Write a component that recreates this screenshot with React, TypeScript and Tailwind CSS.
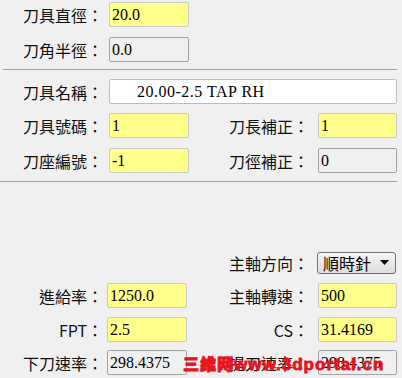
import React from "react";

type Variant = "yellow" | "gray" | "white";

const boxCls: Record<Variant, string> = {
  yellow: "bg-[#ffff8c] border-[#c8c8c8]",
  gray: "bg-[#f0f0f0] border-[#a2a2a2]",
  white: "bg-white border-[#bdbdbd]",
};

function Box({ value, variant, className = "" }: { value: string; variant: Variant; className?: string }) {
  return (
    <div
      className={`h-[25px] border rounded-[2px] flex items-center pl-[2px] text-[16px] leading-none text-black font-['Liberation_Serif',serif] whitespace-pre ${boxCls[variant]} ${className}`}
    >
      {value}
    </div>
  );
}

function Label({ text, className = "" }: { text: string; className?: string }) {
  return (
    <div className={`text-[16px] leading-none text-[#111] text-right whitespace-nowrap ${className}`}>{text}</div>
  );
}

function LeftField({ label, value, variant, inputLeft = "ml-[6px]" }: { label: string; value: string; variant: Variant; inputLeft?: string }) {
  return (
    <div className="flex items-center w-[206px]">
      <Label text={label} className="w-[103px]" />
      <Box value={value} variant={variant} className={`w-[80px] ${inputLeft}`} />
    </div>
  );
}

function RightField({ label, value, variant }: { label: string; value: string; variant: Variant }) {
  return (
    <div className="flex items-center">
      <Label text={label} className="w-[103px]" />
      <Box value={value} variant={variant} className="w-[79px] ml-[9px]" />
    </div>
  );
}

export default function App() {
  return (
    <div className="w-[402px] h-[378px] bg-[#f0f0f0] relative overflow-hidden font-['Noto_Sans_CJK_TC','Noto_Sans_CJK_SC',sans-serif]">
      <div className="flex flex-col pt-[2px]">
        <LeftField label="刀具直徑：" value="20.0" variant="yellow" />
        <div className="mt-[10px]">
          <LeftField label="刀角半徑：" value="0.0" variant="gray" />
        </div>
        <div className="mt-[7px] ml-[3px] w-[394px] h-px bg-[#a0a0a0]" />
        <div className="mt-[9px] flex items-center">
          <Label text="刀具名稱：" className="w-[103px]" />
          <Box value="20.00-2.5 TAP RH" variant="white" className="w-[288px] ml-[6px] pl-[27px] tracking-[0.5px]" />
        </div>
        <div className="mt-[9px] flex items-center">
          <LeftField label="刀具號碼：" value="1" variant="yellow" />
          <RightField label="刀長補正：" value="1" variant="yellow" />
        </div>
        <div className="mt-[10px] flex items-center">
          <LeftField label="刀座編號：" value="-1" variant="yellow" />
          <RightField label="刀徑補正：" value="0" variant="gray" />
        </div>
        <div className="mt-[8px] w-[397px] h-px bg-[#a0a0a0]" />

        <div className="mt-[70px] flex items-center h-[21px]">
          <div className="w-[206px]" />
          <Label text="主軸方向：" className="w-[103px]" />
          <div className="ml-[8px] w-[79px] h-[22px] rounded-[3px] border border-[#707070] bg-gradient-to-b from-[#f4f4f4] to-[#dedede] flex items-center pl-[5px] pr-[6px] justify-between">
            <span className="text-[16px] leading-none text-black">順時針</span>
            <svg width="9" height="5" viewBox="0 0 9 5">
              <polygon points="0,0 9,0 4.5,5" fill="#000" />
            </svg>
          </div>
        </div>
        <div className="mt-[10px] flex items-center">
          <LeftField label="進給率：" value="1250.0" variant="yellow" inputLeft="ml-[4px]" />
          <RightField label="主軸轉速：" value="500" variant="yellow" />
        </div>
        <div className="mt-[9px] flex items-center">
          <LeftField label="FPT：" value="2.5" variant="yellow" inputLeft="ml-[4px]" />
          <RightField label="CS：" value="31.4169" variant="yellow" />
        </div>
        <div className="mt-[8px] flex items-center">
          <LeftField label="下刀速率：" value="298.4375" variant="gray" inputLeft="ml-[4px]" />
          <RightField label="提刀速率：" value="298.4375" variant="gray" />
        </div>
      </div>

      <div className="absolute left-[183px] top-[355px] flex items-baseline text-[#e8121c] font-black leading-none [-webkit-text-stroke:0.8px_#e8121c]">
        <span className="text-[16px] tracking-[1px]">三維网</span>
        <span className="text-[17px] tracking-[1px] font-['Liberation_Sans',sans-serif] font-bold">www.3dportal.cn</span>
      </div>
    </div>
  );
}
